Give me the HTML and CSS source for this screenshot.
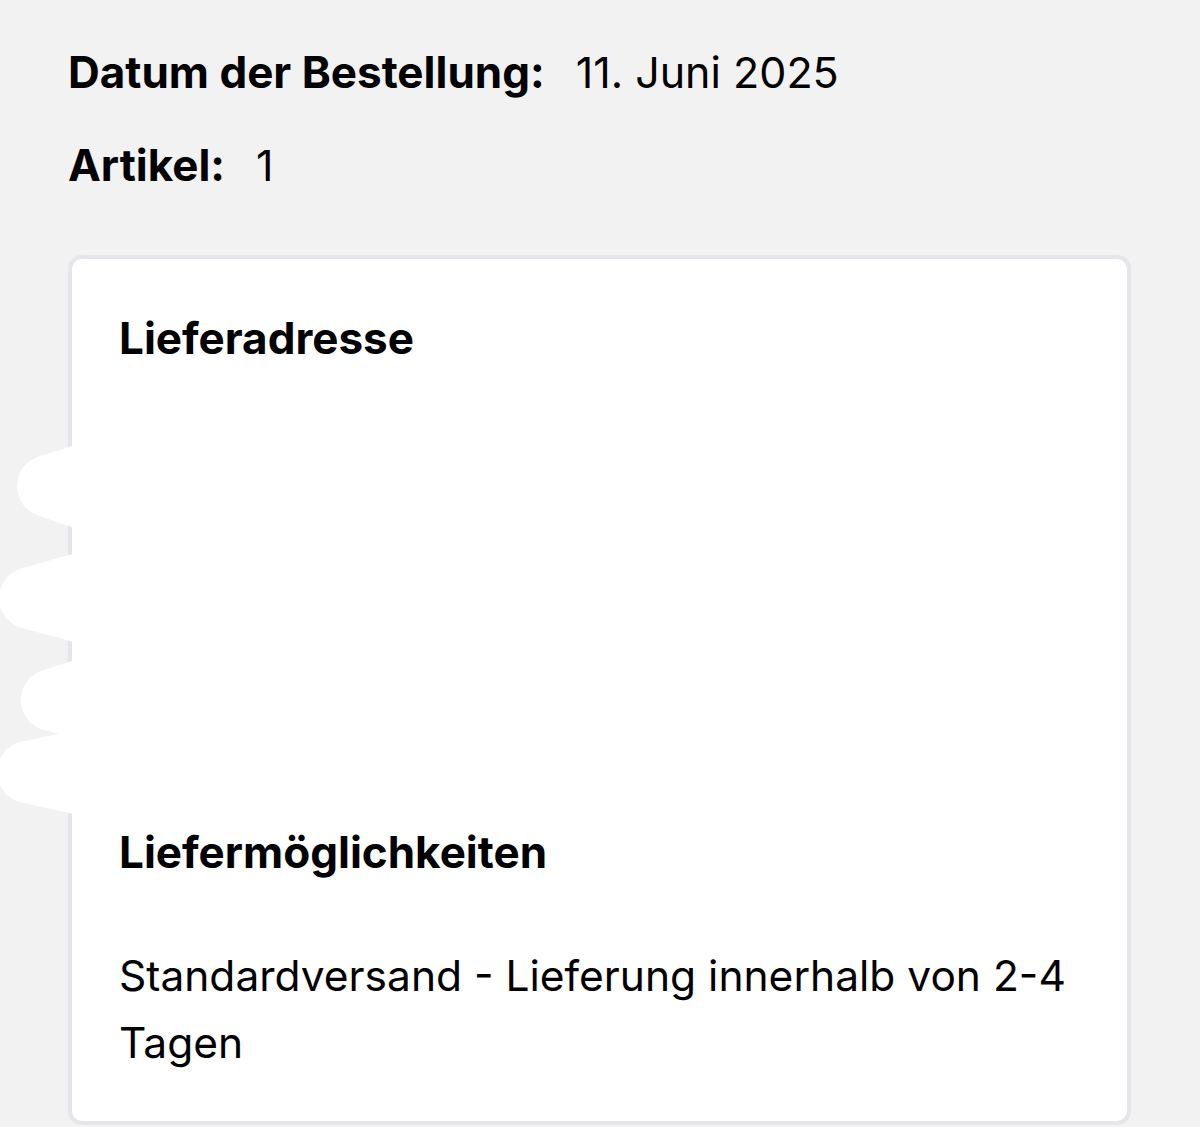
FILE: index.html
```html
<!DOCTYPE html>
<html lang="de">
<head>
    <meta charset="UTF-8">
    <title>Bestellung</title>
    <link rel="stylesheet" href="styles.css">
</head>
<body>
    <div class="page">
        <div class="meta-row">
            <span class="meta-label">Datum der Bestellung:</span>
            <span class="meta-value">11. Juni 2025</span>
        </div>
        <div class="meta-row">
            <span class="meta-label">Artikel:</span>
            <span class="meta-value">1</span>
        </div>

        <!-- Delivery card -->
        <div class="card">
            <h3 class="card-title">Lieferadresse</h3>
            <div class="address"></div>
            <h3 class="card-title">Liefermöglichkeiten</h3>
            <p class="card-text">Standardversand - Lieferung innerhalb von 2-4 Tagen</p>
        </div>
    </div>

    <!-- redaction scribble over the address -->
    <svg class="scribble" width="140" height="400" viewBox="0 0 140 400">
        <path d="M130 40 L48 66 L130 95 M130 150 L30 178 L130 205 M130 255 L52 280 L130 300 M130 330 L28 352 L130 375"
              fill="none" stroke="#fff" stroke-width="62" stroke-linecap="round" stroke-linejoin="round"/>
    </svg>
</body>
</html>
```

FILE: styles.css
```css
* {
    margin: 0;
    padding: 0;
    box-sizing: border-box;
}

body {
    font-family: 'Inter', 'Liberation Sans', sans-serif;
    background: #f2f2f2;
    color: #000;
    height: 1127px;
    overflow: hidden;
}

.page {
    padding: 44px 68px 0;
}

.meta-row {
    display: flex;
    align-items: baseline;
    line-height: 56px;
    margin-bottom: 37px;
}

.meta-label {
    font-size: 44px;
    font-weight: 700;
    margin-right: 31px;
}

.meta-value {
    font-size: 43px;
    font-weight: 400;
}

/* Card */
.card {
    margin-top: 62px;
    width: 1063px;
    background: #fff;
    border: 4px solid #e5e5ea;
    border-radius: 14px;
    padding: 51px 47px 45px;
}

.card-title {
    font-size: 44px;
    font-weight: 700;
    line-height: 56px;
}

.address {
    height: 458px;
}

.card-text {
    font-size: 42.5px;
    line-height: 67px;
    margin-top: 62px;
}

.scribble {
    position: absolute;
    left: 0;
    top: 420px;
}
```
